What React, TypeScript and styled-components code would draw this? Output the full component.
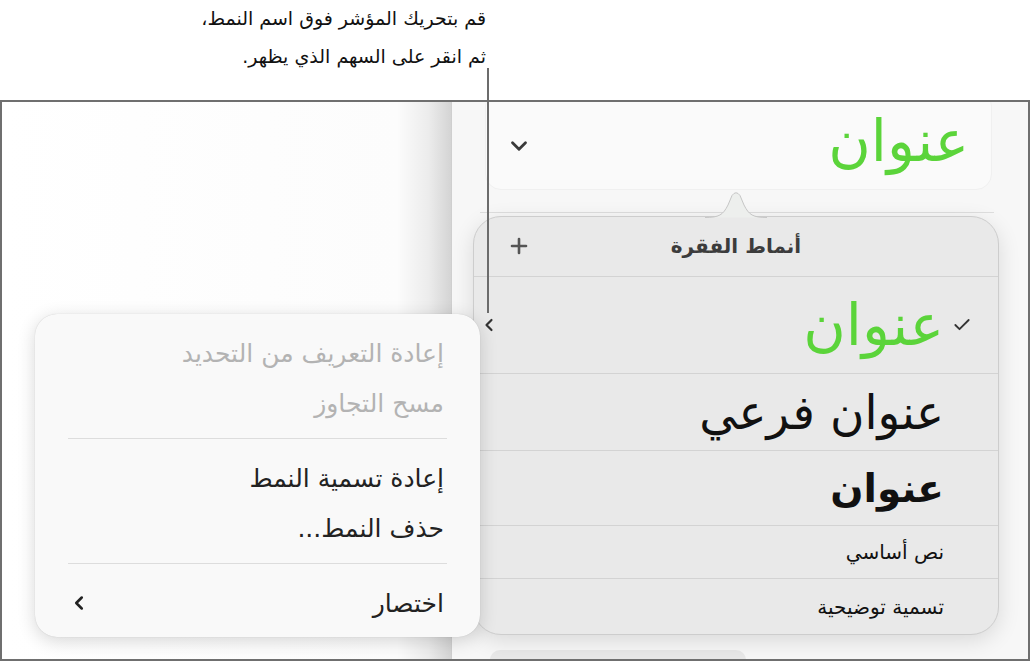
import React from "react";
import styled, { createGlobalStyle } from "styled-components";
import { Check, ChevronDown, ChevronLeft, Plus } from "lucide-react";

const GREEN = "#5bd43a";

const GlobalStyle = createGlobalStyle`
  html, body {
    margin: 0;
    padding: 0;
    background: #ffffff;
  }
  body {
    font-family: "DejaVu Sans", "Noto Sans", sans-serif;
    width: 1031px;
    height: 662px;
    overflow: hidden;
  }
`;

interface StyleRow {
  label: string;
  height: number;
  size: number;
  weight?: number;
  color?: string;
  checked?: boolean;
  hover?: boolean;
}

const styles: StyleRow[] = [
  { label: "عنوان", height: 97, size: 58, color: GREEN, checked: true, hover: true },
  { label: "عنوان فرعي", height: 78, size: 47 },
  { label: "عنوان", height: 75, size: 39, weight: 700 },
  { label: "نص أساسي", height: 53, size: 20 },
  { label: "تسمية توضيحية", height: 55, size: 20 },
];

function App() {
  return (
    <Page>
      <GlobalStyle />
      <Callout>
        <CalloutText dir="rtl">
          قم بتحريك المؤشر فوق اسم النمط،
          <br />
          ثم انقر على السهم الذي يظهر.
        </CalloutText>
        <LeaderLine />
      </Callout>

      <Frame>
        <LeftPane />
        <Sidebar>
          <StyleBox>
            <ChevronDown size={26} strokeWidth={2.6} color="#3a3a3a" />
            <BoxTitle dir="rtl">عنوان</BoxTitle>
          </StyleBox>
          <Divider />
          <Popover>
            <PopArrow width="62" height="28" viewBox="0 0 62 28">
              <path
                d="M0 27.5 C 14 27.5, 18 25, 23 15 L 27 5.5 Q 31 0 35 5.5 L 39 15 C 44 25, 48 27.5, 62 27.5"
                fill="#edefed"
                stroke="#c6c6c6"
                strokeWidth="1"
              />
            </PopArrow>
            <PopHeader>
              <Plus size={24} strokeWidth={2.6} color="#555" />
              <PopTitle dir="rtl">أنماط الفقرة</PopTitle>
              <span />
            </PopHeader>
            {styles.map((s, i) => (
              <Row key={i} $h={s.height} dir="rtl">
                <CheckSlot>
                  {s.checked && <Check size={20} strokeWidth={2.2} color="#333" />}
                </CheckSlot>
                <RowLabel $size={s.size} $weight={s.weight} $color={s.color}>
                  {s.label}
                </RowLabel>
                {s.hover && (
                  <HoverArrow>
                    <ChevronLeft size={20} strokeWidth={2.6} color="#333" />
                  </HoverArrow>
                )}
              </Row>
            ))}
          </Popover>
          <PeekBar />
        </Sidebar>

        <Menu dir="rtl">
          <MenuItem $disabled>إعادة التعريف من التحديد</MenuItem>
          <MenuItem $disabled>مسح التجاوز</MenuItem>
          <MenuSep />
          <MenuItem>إعادة تسمية النمط</MenuItem>
          <MenuItem>حذف النمط...</MenuItem>
          <MenuSep />
          <MenuItem>
            <span>اختصار</span>
            <ChevronLeft size={22} strokeWidth={2.8} color="#222" />
          </MenuItem>
        </Menu>
      </Frame>
    </Page>
  );
}

export default App;

const Page = styled.div`
  width: 1031px;
  height: 662px;
  display: flex;
  flex-direction: column;
`;

const Callout = styled.div`
  position: relative;
  height: 100px;
  display: flex;
  justify-content: flex-start;
`;

const CalloutText = styled.div`
  width: 486px;
  margin-top: -1px;
  text-align: right;
  font-size: 19px;
  line-height: 38px;
  color: #111;
`;

const LeaderLine = styled.div`
  position: absolute;
  left: 487px;
  top: 68px;
  width: 2px;
  height: 245px;
  background: #6c6c6c;
  z-index: 5;
`;

const Frame = styled.div`
  position: relative;
  width: 1030px;
  height: 561px;
  box-sizing: border-box;
  border: 2px solid #6f6f6f;
  display: grid;
  grid-template-columns: 449px 1fr;
  overflow: hidden;
`;

const LeftPane = styled.div`
  background: linear-gradient(
    to right,
    #ffffff 0%,
    #fcfcfc 88%,
    #ececec 95%,
    #d4d4d4 100%
  );
`;

const Sidebar = styled.div`
  background: #f7f7f7;
  border-left: 1px solid #cfcfcf;
  display: flex;
  flex-direction: column;
`;

const StyleBox = styled.div`
  margin: -12px 0 0 33px;
  width: 507px;
  height: 100px;
  box-sizing: border-box;
  padding: 12px 22px 0 20px;
  background: #fafafa;
  border: 1px solid #f0f0f0;
  border-radius: 16px;
  display: flex;
  align-items: center;
  justify-content: space-between;
`;

const BoxTitle = styled.span`
  font-size: 58px;
  color: ${GREEN};
  line-height: 1;
  margin-top: -10px;
`;

const Divider = styled.div`
  margin: 22px 0 0 28px;
  width: 514px;
  height: 1px;
  background: #dedede;
`;

const Popover = styled.div`
  position: relative;
  margin: 3px 0 0 21px;
  width: 526px;
  height: 419px;
  box-sizing: border-box;
  background: #e9e9e9;
  border: 1px solid #cdcdcd;
  border-radius: 28px;
  box-shadow: 0 6px 22px rgba(0, 0, 0, 0.12);
  display: flex;
  flex-direction: column;
`;

const PopArrow = styled.svg`
  position: absolute;
  left: 50%;
  top: -27px;
  transform: translateX(-50%);
  display: block;
`;

const PopHeader = styled.div`
  height: 59px;
  display: grid;
  grid-template-columns: 1fr auto 1fr;
  align-items: center;
  padding-left: 33px;
  border-bottom: 1px solid #d3d3d3;
`;

const PopTitle = styled.span`
  font-size: 20px;
  font-weight: 700;
  color: #3c3c3c;
  margin-left: -33px;
`;

const Row = styled.div<{ $h: number }>`
  height: ${(p) => p.$h}px;
  box-sizing: border-box;
  display: flex;
  align-items: center;
  padding: 0 26px 0 5px;
  border-bottom: 1px solid #d3d3d3;

  &:last-child {
    border-bottom: none;
  }
`;

const CheckSlot = styled.div`
  width: 28px;
  display: flex;
  justify-content: flex-start;
  align-items: center;
`;

const RowLabel = styled.span<{ $size: number; $weight?: number; $color?: string }>`
  font-size: ${(p) => p.$size}px;
  font-weight: ${(p) => p.$weight ?? 400};
  color: ${(p) => p.$color ?? "#111"};
  line-height: 1;
  white-space: nowrap;
`;

const HoverArrow = styled.div`
  margin-right: auto;
  display: flex;
  align-items: center;
`;

const PeekBar = styled.div`
  margin: 15px 0 0 38px;
  width: 256px;
  height: 24px;
  background: #e8e8e8;
  border-radius: 10px;
`;

const Menu = styled.div`
  position: absolute;
  left: 33px;
  top: 212px;
  width: 445px;
  height: 323px;
  box-sizing: border-box;
  padding: 14px 0 0;
  background: #f9f9f9;
  border-radius: 22px;
  box-shadow: 0 4px 18px rgba(0, 0, 0, 0.16), 0 0 1px rgba(0, 0, 0, 0.2);
  display: flex;
  flex-direction: column;
  z-index: 4;
`;

const MenuItem = styled.div<{ $disabled?: boolean }>`
  height: 50px;
  padding: 0 36px 0 33px;
  display: flex;
  align-items: center;
  justify-content: space-between;
  font-size: 25px;
  color: ${(p) => (p.$disabled ? "#b3b3b3" : "#222")};
  white-space: nowrap;
`;

const MenuSep = styled.div`
  margin: 10px 33px 14px;
  height: 1px;
  background: #dddddd;
`;
